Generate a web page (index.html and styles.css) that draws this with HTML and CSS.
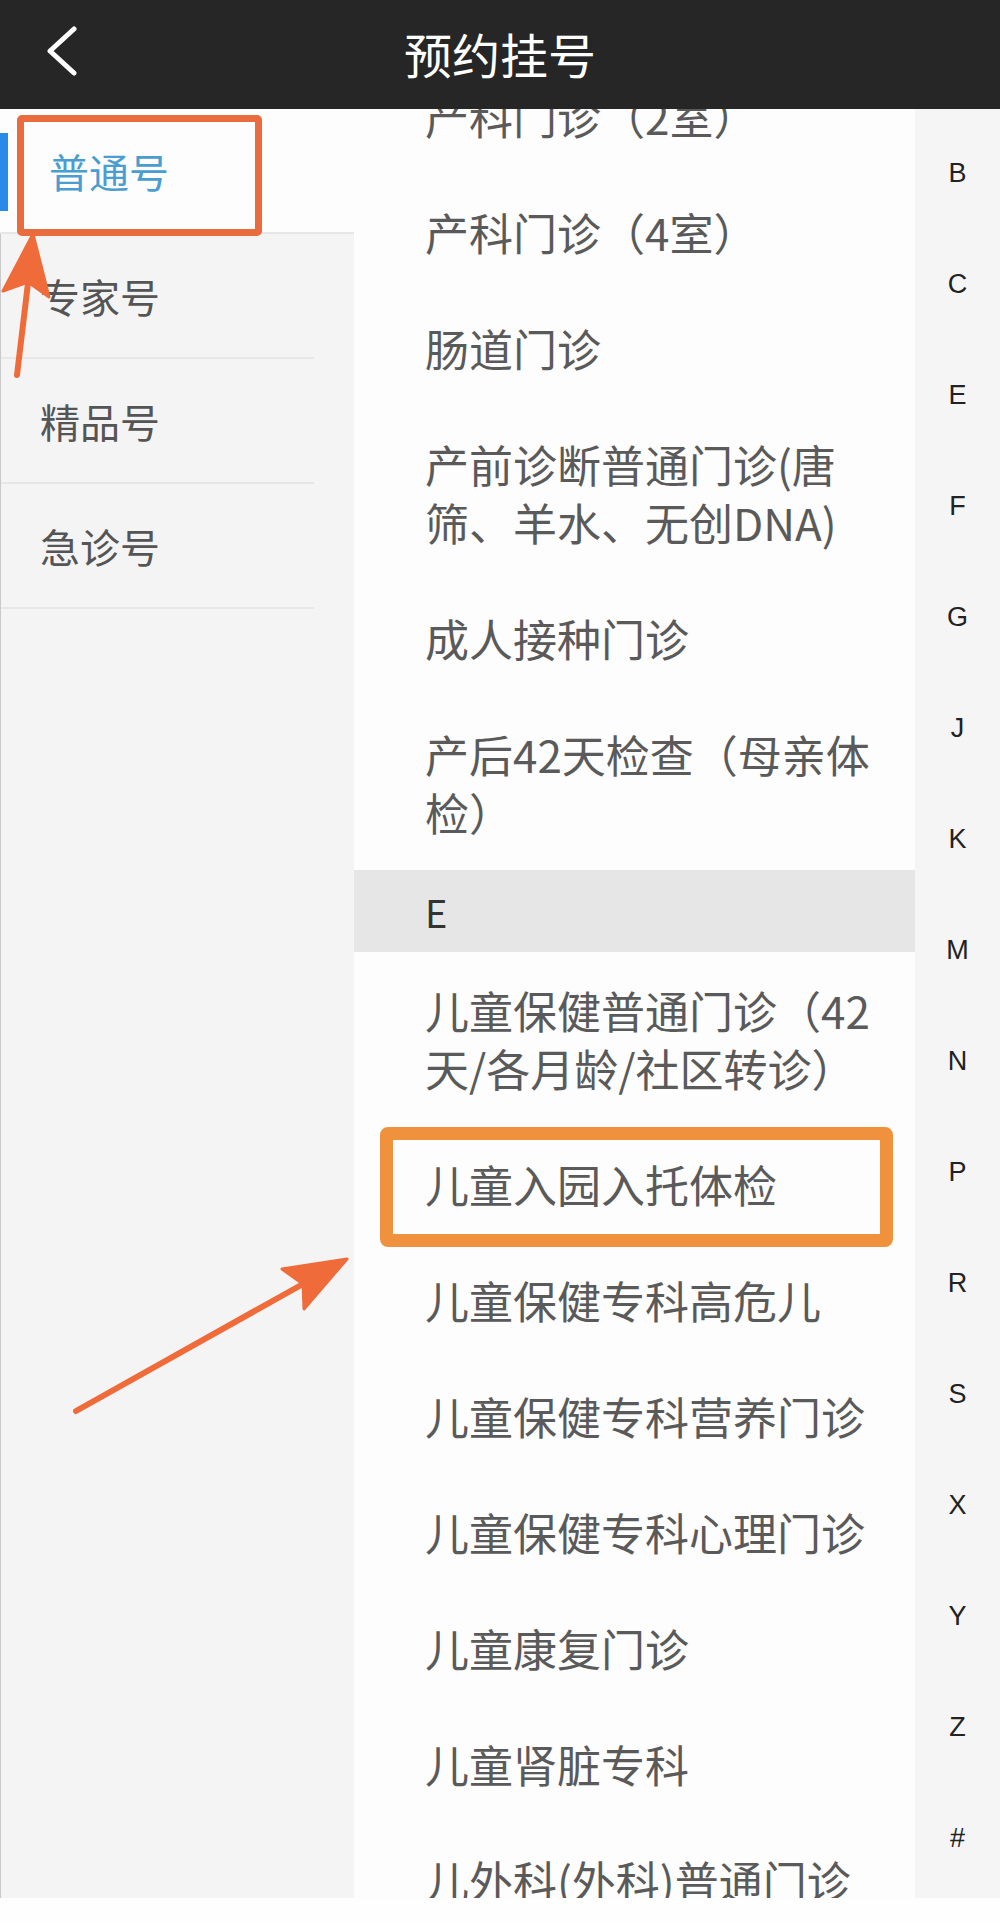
FILE: index.html
```html
<!DOCTYPE html>
<html lang="zh-CN">
<head>
    <meta charset="UTF-8">
    <meta name="viewport" content="width=device-width, initial-scale=1.0">
    <title>预约挂号</title>
    <link rel="stylesheet" href="styles.css">
</head>
<body>
    <div class="page">
        <header class="topbar">
            <a class="back" href="#">
                <svg width="32" height="50" viewBox="0 0 32 50">
                    <path d="M28 3 L4 25 L28 47" fill="none" stroke="#fff" stroke-width="5" stroke-linecap="round" stroke-linejoin="round"/>
                </svg>
            </a>
            <h1 class="title">预约挂号</h1>
            <span></span>
        </header>

        <div class="main">
            <ul class="types">
                <li class="type active">普通号</li>
                <li class="type">专家号</li>
                <li class="type">精品号</li>
                <li class="type">急诊号</li>
            </ul>

            <div class="depts">
                <ul class="dept-list">
                    <li class="dept">产科门诊（2室）</li>
                    <li class="dept">产科门诊（4室）</li>
                    <li class="dept">肠道门诊</li>
                    <li class="dept">产前诊断普通门诊(唐筛、羊水、无创DNA)</li>
                    <li class="dept">成人接种门诊</li>
                    <li class="dept">产后42天检查（母亲体检）</li>
                    <li class="group">E</li>
                    <li class="dept">儿童保健普通门诊（42天/各月龄/社区转诊）</li>
                    <li class="dept">儿童入园入托体检</li>
                    <li class="dept">儿童保健专科高危儿</li>
                    <li class="dept">儿童保健专科营养门诊</li>
                    <li class="dept">儿童保健专科心理门诊</li>
                    <li class="dept">儿童康复门诊</li>
                    <li class="dept">儿童肾脏专科</li>
                    <li class="dept">儿外科(外科)普通门诊</li>
                    <li class="dept">耳鼻喉科门诊</li>
                </ul>
            </div>

            <ul class="index">
                <li>B</li><li>C</li><li>E</li><li>F</li>
                <li>G</li><li>J</li><li>K</li><li>M</li>
                <li>N</li><li>P</li><li>R</li><li>S</li>
                <li>X</li><li>Y</li><li>Z</li><li>#</li>
            </ul>
        </div>

        <div class="bottom-strip"></div>
    </div>

    <!-- annotation marks drawn over the screenshot -->
    <div class="mark mark-type"></div>
    <div class="mark mark-dept"></div>
    <svg class="arrows" width="1000" height="1923" viewBox="0 0 1000 1923">
        <line x1="17" y1="375" x2="28" y2="283" stroke="#ef6c3a" stroke-width="6" stroke-linecap="round"/>
        <polygon points="33,234 3,291 28,282 49,297" fill="#ef6c3a" stroke="#ef6c3a" stroke-width="3" stroke-linejoin="round"/>
        <line x1="76" y1="1411" x2="303" y2="1284" stroke="#ef6c3a" stroke-width="6" stroke-linecap="round"/>
        <polygon points="347,1259 282,1269 303,1284 304,1309" fill="#ef6c3a" stroke="#ef6c3a" stroke-width="3" stroke-linejoin="round"/>
    </svg>
</body>
</html>
```

FILE: styles.css
```css
body {
    margin: 0;
    background-color: #fefefe;
    font-family: "Noto Sans CJK SC", "Noto Sans", sans-serif;
    position: relative;
    overflow: hidden;
}

ul {
    list-style: none;
    margin: 0;
    padding: 0;
}

.page {
    width: 1000px;
    height: 1923px;
    display: flex;
    flex-direction: column;
}

/* Top bar */
.topbar {
    height: 109px;
    flex: none;
    background-color: #262626;
    display: grid;
    grid-template-columns: 1fr auto 1fr;
    align-items: center;
}

.back {
    justify-self: start;
    margin-left: 46px;
    margin-top: -8px;
    display: flex;
}

.title {
    margin: 0;
    color: #fff;
    font-size: 48px;
    font-weight: 400;
    line-height: 1;
    margin-top: -4px;
}

/* Body columns */
.main {
    flex: none;
    height: 1789px;
    display: flex;
    overflow: hidden;
}

.types {
    width: 353px;
    flex: none;
    background-color: #f4f4f4;
    border-left: 1px solid #c9c9c9;
}

.type {
    height: 123px;
    display: flex;
    align-items: center;
    padding-left: 39px;
    font-size: 40px;
    color: #555;
    position: relative;
    border-bottom: 2px solid #e7e7e7;
    margin-right: 40px;
}

.type.active {
    background-color: #fdfdfd;
    color: #4a9dd0;
    padding-left: 49px;
    margin-right: 0;
    margin-left: -1px;
}

.type.active::before {
    content: "";
    position: absolute;
    left: 0;
    top: 24px;
    width: 8px;
    height: 78px;
    background-color: #2a8ae8;
}

.depts {
    width: 561px;
    flex: none;
    background-color: #fdfdfd;
    overflow: hidden;
}

.dept-list {
    margin-top: -51px;
}

.dept {
    padding: 29px 40px 29px 71px;
    font-size: 44px;
    line-height: 58px;
    color: #5a5a5a;
    text-spacing-trim: space-all;
}

.group {
    height: 82px;
    display: flex;
    align-items: center;
    padding-left: 71px;
    background-color: #e6e6e6;
    font-size: 38px;
    color: #333;
}

.index {
    flex: 1;
    background-color: #f5f5f5;
    padding-top: 9px;
}

.index li {
    height: 111px;
    display: flex;
    align-items: center;
    justify-content: center;
    font-family: "Liberation Sans", Arial, sans-serif;
    font-size: 27px;
    color: #222;
}

.bottom-strip {
    flex: 1;
    background-color: #fefefe;
}

/* Annotations */
.mark {
    position: absolute;
    box-sizing: border-box;
    pointer-events: none;
}

.mark-type {
    left: 17px;
    top: 115px;
    width: 245px;
    height: 121px;
    border: 7px solid #e96c3f;
    border-radius: 5px;
}

.mark-dept {
    left: 380px;
    top: 1127px;
    width: 513px;
    height: 120px;
    border: 13px solid #f0913e;
    border-radius: 8px;
}

.arrows {
    position: absolute;
    left: 0;
    top: 0;
    pointer-events: none;
}
```
